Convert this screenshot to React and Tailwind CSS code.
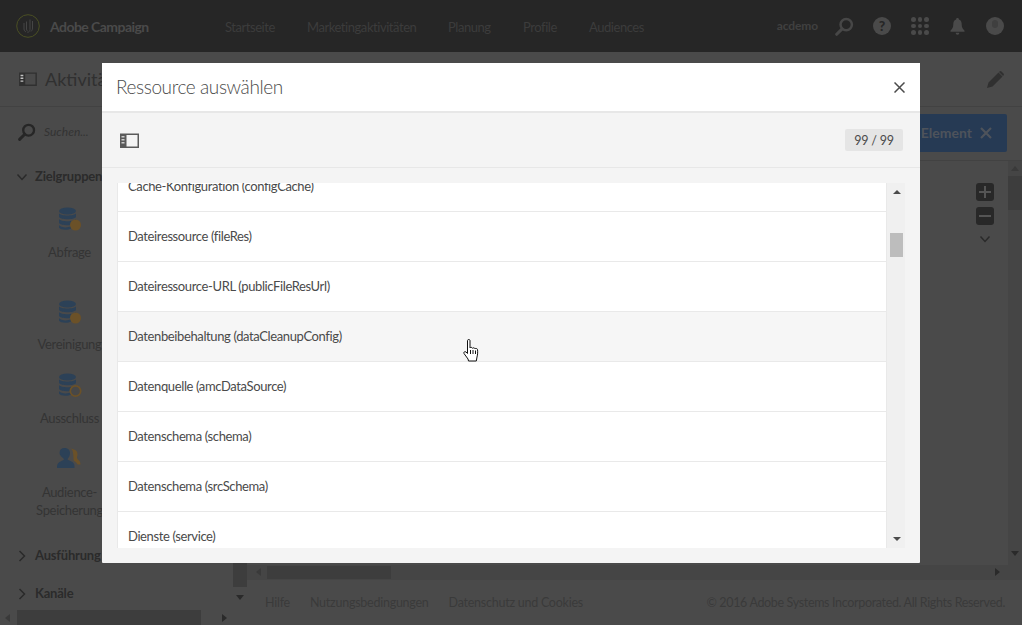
import React from "react";

const F = "font-['Lato','Open_Sans',sans-serif]";

function PanelIcon({ c = "#5a5a5a", className = "" }) {
  return (
    <svg viewBox="0 0 19 15" className={className}>
      <path fillRule="evenodd" fill={c} d="M0 0.5h19v14.5H0z M6.5 2v11.5h11V2z" />
      <path fill="#f3f3f3" d="M1.5 3h3v1.5h-3z M1.5 6h3v1.5h-3z M1.5 9h3v1.5h-3z" opacity="0.75" />
    </svg>
  );
}

function Magnifier({ c, className = "" }) {
  return (
    <svg viewBox="0 0 20 20" className={className} fill="none" stroke={c}>
      <circle cx="11.8" cy="8" r="6" strokeWidth="2.6" />
      <path d="M7.5 12.5L1.8 18.2" strokeWidth="3.2" strokeLinecap="round" />
    </svg>
  );
}

function Chevron({ open, className = "" }) {
  return (
    <svg viewBox="0 0 12 12" className={className} fill="none" stroke="#2a2a2a" strokeWidth="1.5">
      {open ? <path d="M1.5 3.5L6 8.5l4.5-5" /> : <path d="M3.5 1L8.5 6l-5 5" />}
    </svg>
  );
}

function Db({ ring }) {
  return (
    <svg viewBox="0 0 24 26" className="w-6 h-[26px]">
      <ellipse cx="9.5" cy="4" rx="8.5" ry="3.6" fill="#2c4157" />
      <path d="M1 6.2c1.5 3 15.5 3 17 0V10c-1.5 3-15.5 3-17 0z M1 12c1.5 3 15.5 3 17 0v4c-1.5 3-15.5 3-17 0z M1 18c1.5 3 10 3 12 1v2.500c-3 2-11 1.500-12-1z" fill="#2c4157" />
      {ring ? (
        <circle cx="17.500" cy="18" r="5.200" fill="#474747" stroke="#6b5128" strokeWidth="1.700" />
      ) : (
        <circle cx="17.500" cy="18" r="5.500" fill="#6b5128" />
      )}
    </svg>
  );
}

function People() {
  return (
    <svg viewBox="0 0 26 26" className="w-[26px] h-[26px]">
      <path d="M16 7c0-3-2-5-3.500-5S18 3 19.500 5s1 4 .5 6c-.3 1.500 1 2.500 2 3.500 1 1 1.500 2.500 1.500 4h-3c-1-3-4-3-4-5 0-2 0-3.500-.5-6.500z" fill="#6b5128" />
      <path d="M7.500 2c3 0 5.500 1.800 5.500 5 0 2.500-1 4.500-2.500 6 0 1.200 2 1.500 4 2.500s3 2.500 3 5v1.500H0V20.500c0-2.500 1.500-4 3.500-5s3.500-1.300 3.500-2.500C5.500 11.500 2.500 9.500 2.500 7c0-3.200 2-5 5-5z" fill="#2c4157" />
    </svg>
  );
}

const navItems = [
  ["Startseite", "w-[82px]"],
  ["Marketingaktivitäten", "w-[141px]"],
  ["Planung", "w-[75px]"],
  ["Profile", "w-[66px]"],
  ["Audiences", ""],
];
const rows = [
  "Cache-Konfiguration (configCache)",
  "Dateiressource (fileRes)",
  "Dateiressource-URL (publicFileResUrl)",
  "Datenbeibehaltung (dataCleanupConfig)",
  "Datenquelle (amcDataSource)",
  "Datenschema (schema)",
  "Datenschema (srcSchema)",
  "Dienste (service)",
];

function Activity({ icon, label, className = "" }) {
  return (
    <div className={`flex flex-col items-center text-[13px] tracking-[-0.33px] leading-[18px] text-[#343434] ${className}`}>
      {icon}
      {label}
    </div>
  );
}

function Header() {
  return (
    <header className="h-[52px] shrink-0 bg-[#262626] flex items-center text-[#3f3f3f]">
      <svg viewBox="0 0 24 24" className="w-6 h-6 ml-4 shrink-0" fill="none">
        <circle cx="12" cy="12" r="11.300" stroke="#4a4f24" strokeWidth="1" />
        <path d="M8 9v6c0 1.500 1 2.500 2 3M10.500 7.500v7.500c0 1.500 1 2 1.500 2.500M14 5.500v10c0 1.500-1 2.500-2.500 3M16.500 7v7c0 1.500-.5 2.500-1.500 3.500" stroke="#454545" strokeWidth="1" />
      </svg>
      <span className="ml-[10px] w-[175px] text-[14px] tracking-[-0.55px] font-bold text-[#4a4a4a]">Adobe Campaign</span>
      <nav className="flex pt-[3px] text-[13px] tracking-[-0.45px] text-[#3c3c3c]">
        {navItems.map(([n, w]) => (
          <span key={n} className={w}>{n}</span>
        ))}
      </nav>
      <div className="ml-auto flex items-center">
        <span className="text-[12px] tracking-[-0.1px] font-bold text-[#404040]">acdemo</span>
        <Magnifier c="#474747" className="w-[19px] h-[19px] ml-[17px]" />
        <span className="w-[18px] h-[18px] ml-[19px] rounded-full bg-[#4a4a4a] flex items-center justify-center text-[14px] font-black leading-none text-[#262626]">?</span>
        <div className="grid grid-cols-3 gap-[2px] w-[18px] ml-[20px]">
          {Array.from({ length: 9 }).map((_, i) => (
            <span key={i} className="w-[4.600px] h-[4.600px] rounded-full bg-[#4a4a4a]" />
          ))}
        </div>
        <svg viewBox="0 0 16 18" className="w-[15px] h-[18px] ml-[21px]">
          <path fill="#4a4a4a" d="M8 0.500c1 0 1.500.7 1.500 1.500 2.500.7 3 3 3 5.500 0 3 1 4.500 3 6.500v1H0.500v-1c2-2 3-3.500 3-6.500 0-2.500.5-4.800 3-5.500C6.500 1.200 7 .500 8 .500z M6 16.200h4a2 2 0 0 1-4 0z" />
        </svg>
        <span className="relative w-[18px] h-[18px] ml-[21px] mr-[18px] rounded-full bg-[#4a4a4a]">
          <span className="absolute left-[6px] top-[3px] w-[6px] h-[8px] rounded-full bg-[#3f3f3f]" />
        </span>
      </div>
    </header>
  );
}

function SectionTitle({ open, label, className = "" }) {
  return (
    <div className={`flex items-center pl-[16px] gap-[7px] h-[20px] shrink-0 text-[13px] tracking-[-0.2px] font-bold text-[#2b2b2b] ${className}`}>
      <Chevron open={open} className="w-3 h-3" />
      {label}
    </div>
  );
}

function Sidebar() {
  return (
    <aside className="w-[247px] shrink-0 flex flex-col">
      <div className="h-[55px] flex items-center pl-[19px] gap-[8px] border-b border-[#424242] shrink-0">
        <PanelIcon c="#303030" className="w-[18px] h-[14px]" />
        <span className="text-[18px] text-[#303030]">Aktivitäten</span>
      </div>
      <div className="flex-1 flex min-h-0">
        <div className="w-[233px] flex flex-col">
          <div className="flex-1 min-h-0 flex flex-col">
            <div className="h-[50px] flex items-center pl-[18px] gap-[8px] shrink-0">
              <Magnifier c="#262626" className="w-[18px] h-[18px]" />
              <span className="text-[12px] italic text-[#333333]">Suchen...</span>
            </div>
            <SectionTitle open label="Zielgruppen" className="mt-[10px]" />
            <div className="w-[139px] flex flex-col">
              <Activity className="mt-[20px]" icon={<Db />} label={<span className="mt-[10px]">Abfrage</span>} />
              <Activity className="mt-[39px]" icon={<Db />} label={<span className="mt-[9px]">Vereinigung</span>} />
              <Activity className="mt-[20px]" icon={<Db ring />} label={<span className="mt-[10px]">Ausschluss</span>} />
              <Activity className="mt-[19px]" icon={<People />} label={<span className="mt-[11px] text-center">Audience-<br />Speicherung</span>} />
            </div>
            <SectionTitle label="Ausführung" className="mt-[27px]" />
            <SectionTitle label="Kanäle" className="mt-[18px]" />
          </div>
          <div className="h-[15px] shrink-0 flex items-center">
            <span className="ml-[5px] w-0 h-0 border-y-[4px] border-y-transparent border-r-[5px] border-r-[#3a3a3a]" />
            <span className="ml-[7px] w-[184px] h-[15px] bg-[#3d3d3d]" />
            <span className="ml-[21px] w-0 h-0 border-y-[4px] border-y-transparent border-l-[5px] border-l-[#2a2a2a]" />
          </div>
        </div>
        <div className="w-[14px] flex flex-col items-center">
          <span className="w-full h-[480px] shrink-0 bg-[#3d3d3d]" />
          <span className="mt-[8px] w-0 h-0 border-x-[4px] border-x-transparent border-t-[5px] border-t-[#2a2a2a]" />
        </div>
      </div>
    </aside>
  );
}

function Main() {
  return (
    <main className="flex-1 min-w-0 flex flex-col">
      <div className="h-[55px] flex items-center justify-end pr-[17px] border-b border-[#424242] shrink-0">
        <svg viewBox="0 0 18 18" className="w-[18px] h-[18px]" fill="#303030">
          <path d="M0 18l1.500-5.500L11.500 2.500l4 4L5.500 16.500z M12.500 1.500a1.500 1.500 0 0 1 2 0l2 2a1.500 1.500 0 0 1 0 2l-.5.5-4-4z" />
        </svg>
      </div>
      <div className="h-[54px] flex items-center justify-end pr-[15px] pb-[1px] border-b border-[#424242] shrink-0">
        <div className="w-[120px] h-[38px] pb-[1px] rounded-[2px] bg-[#263a54] flex items-center justify-end pr-[15px] gap-[8px] text-[14px] font-bold text-[#4e535b]">
          Element
          <svg viewBox="0 0 12 12" className="w-3 h-3" stroke="#4e535b" strokeWidth="2.200">
            <path d="M1 1l10 10M11 1L1 11" />
          </svg>
        </div>
      </div>
      <div className="flex-1 flex min-h-0">
        <div className="flex-1 flex flex-col items-end pt-[22px] pr-[14px] gap-[6px]">
          <span className="w-[18px] h-[18px] rounded-[3px] bg-[#282828] flex items-center justify-center">
            <svg viewBox="0 0 12 12" className="w-3 h-3" fill="#555"><path d="M5 0h2v5h5v2H7v5H5V7H0V5h5z" /></svg>
          </span>
          <span className="w-[18px] h-[18px] rounded-[3px] bg-[#282828] flex items-center justify-center">
            <svg viewBox="0 0 12 12" className="w-3 h-3" fill="#555"><path d="M0 5h12v2H0z" /></svg>
          </span>
          <Chevron open className="w-3 h-3 mt-[2px] mr-[3px]" />
        </div>
        <div className="w-[14px] flex flex-col items-center bg-[#454545]">
          <span className="mt-[5px] w-0 h-0 border-x-[4px] border-x-transparent border-b-[5px] border-b-[#3a3a3a]" />
          <span className="mt-[5px] w-[14px] h-[34px] bg-[#3d3d3d]" />
          <span className="mt-auto mb-[9px] w-0 h-0 border-x-[4px] border-x-transparent border-t-[5px] border-t-[#2a2a2a]" />
        </div>
      </div>
      <div className="h-[14px] flex items-center shrink-0 bg-[#454545]">
        <span className="ml-[9px] w-0 h-0 border-y-[4px] border-y-transparent border-r-[5px] border-r-[#3a3a3a]" />
        <span className="ml-[6px] w-[124px] h-[13px] bg-[#3d3d3d]" />
        <span className="ml-auto mr-[22px] w-0 h-0 border-y-[4px] border-y-transparent border-l-[5px] border-l-[#2a2a2a]" />
      </div>
      <footer className="h-[46px] flex items-center shrink-0 pl-[18px] pr-[17px] pt-[1px] text-[12.500px] tracking-[-0.25px] text-[#3a3a3a] border-t border-[#454545]">
        <span>Hilfe</span>
        <span className="ml-[20px]">Nutzungsbedingungen</span>
        <span className="ml-[20px]">Datenschutz und Cookies</span>
        <span className="ml-auto tracking-[-0.34px]">© 2016 Adobe Systems Incorporated. All Rights Reserved.</span>
      </footer>
    </main>
  );
}

function Row({ label, hover, className = "" }) {
  return (
    <div className={`h-[50px] shrink-0 flex items-center pl-[10px] border-b border-[#e9e9e9] text-[13px] tracking-[-0.38px] text-[#4a4a4a] ${hover ? "bg-[#f6f6f6]" : ""} ${className}`}>
      {label}
    </div>
  );
}

function Modal() {
  return (
    <div className="absolute left-[102px] top-[63px] w-[818px] h-[500px] bg-[#f4f4f4] flex flex-col rounded-[1px]">
      <div className="h-[48px] shrink-0 bg-white flex items-center justify-between pl-[14px] pr-[15px] border-b-2 border-[#e7e7e7] box-content">
        <span className="text-[19px] tracking-[-0.4px] font-light text-[#4b4b4b]">Ressource auswählen</span>
        <svg viewBox="0 0 11 11" className="w-[11px] h-[11px]" stroke="#4b4b4b" strokeWidth="1.500">
          <path d="M0.500 0.500l10 10M10.500 0.500l-10 10" />
        </svg>
      </div>
      <div className="h-[55px] shrink-0 flex items-center justify-between pl-[18px] pr-[17px] border-b border-[#e7e7e7]">
        <PanelIcon className="w-[19px] h-[15px]" />
        <span className="w-[58px] h-[22px] pt-[2px] rounded-[2px] bg-[#e5e5e5] flex items-center justify-center text-[12.500px] tracking-[-0.2px] text-[#4b4b4b]">99 / 99</span>
      </div>
      <div className="mt-[15px] ml-[15px] mr-[15px] h-[365px] flex overflow-hidden">
        <div className="flex-1 min-w-0 bg-white border-l border-r border-[#e9e9e9] flex flex-col overflow-hidden">
          {rows.map((r, i) => (
            <Row key={r} label={r} hover={i === 3} className={i === 0 ? "mt-[-21px]" : ""} />
          ))}
        </div>
        <div className="w-[18px] shrink-0 bg-[#f0f0f0] flex flex-col items-center pl-[1px]">
          <span className="mt-[7px] w-0 h-0 border-x-[4px] border-x-transparent border-b-[4px] border-b-[#4b4b4b]" />
          <span className="mt-[39px] w-[13px] h-[24px] bg-[#bdbdbd]" />
          <span className="mt-auto mb-[7px] w-0 h-0 border-x-[4px] border-x-transparent border-t-[4px] border-t-[#4b4b4b]" />
        </div>
      </div>
    </div>
  );
}

function Cursor() {
  return (
    <svg viewBox="0 0 17 24" className="absolute left-[463px] top-[339px] w-[17px] h-[24px]">
      <path
        d="M4.500 1.500c0-1.300 2.500-1.300 2.500 0V9c.5-1 2.200-.8 2.500.3.5-.8 2.200-.6 2.500.5.6-.7 2.300-.4 2.500.8.300 2 .2 5-.5 7.400l-.7 4H5.500l-.5-2L1 14.500c-.7-1.200.8-2.500 2-1.500l1.500 1.500z"
        fill="#fff"
        stroke="#111"
        strokeWidth="1"
      />
      <path d="M7.500 11v4M10 11v4M12.500 11.500v3.500" stroke="#111" strokeWidth="1" />
    </svg>
  );
}

export default function App() {
  return (
    <div className={`relative w-[1022px] h-[625px] overflow-hidden bg-[#4a4a4a] flex flex-col ${F}`}>
      <Header />
      <div className="flex-1 flex min-h-0">
        <Sidebar />
        <Main />
      </div>
      <Modal />
      <Cursor />
    </div>
  );
}
